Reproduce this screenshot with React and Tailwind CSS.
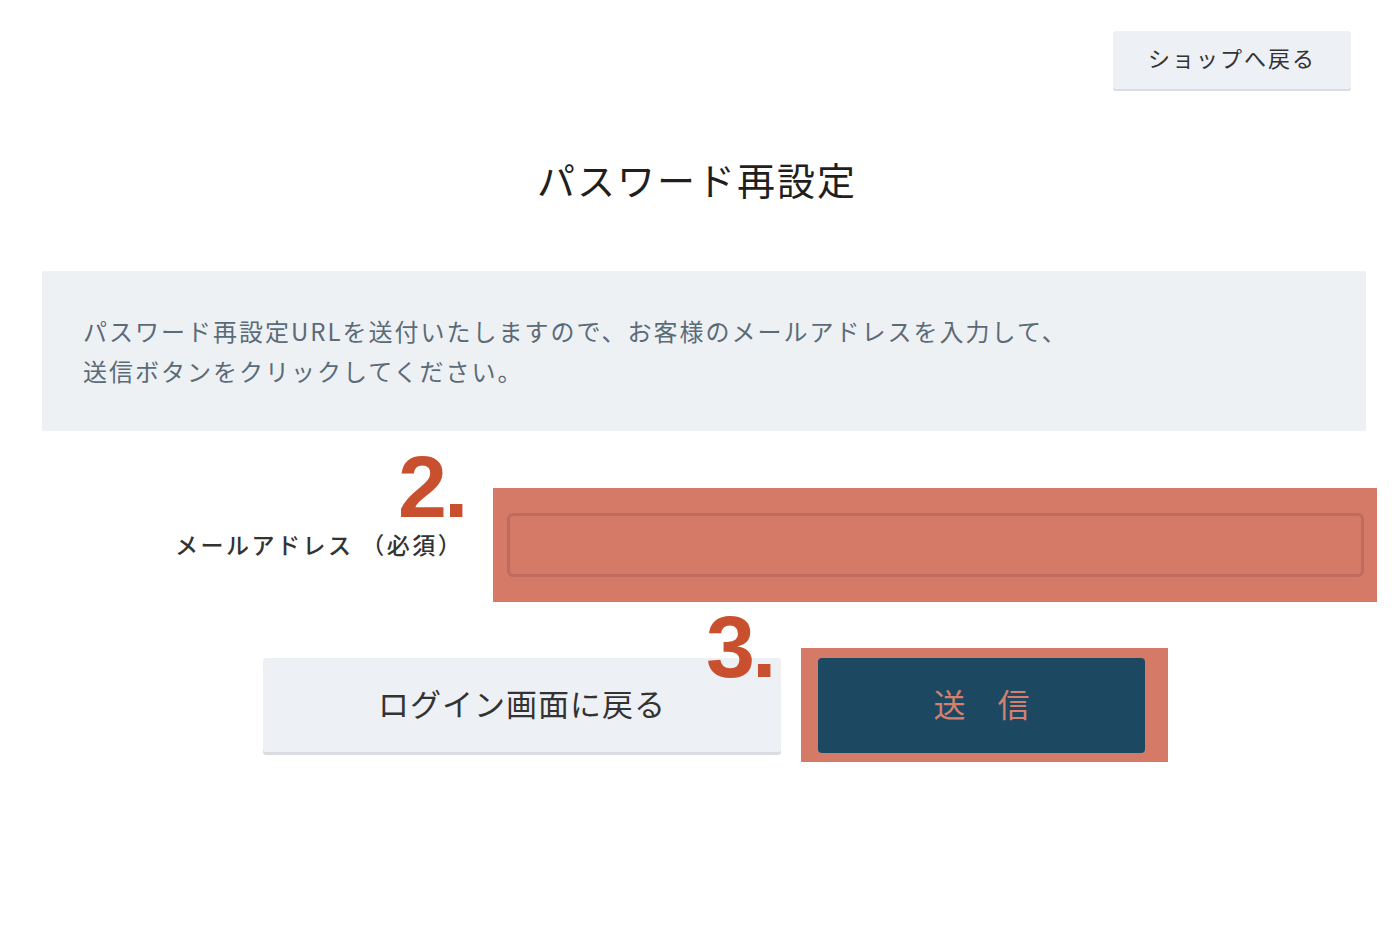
// Password reset screen with annotation highlights
import React from 'react'

const FONT = "font-['Noto_Sans_CJK_JP','Noto_Sans',sans-serif]"

function StepMark({ label, className }) {
  // annotation numbers drawn over the form
  return (
    <span
      className={`absolute font-['Liberation_Sans',Arial,sans-serif] font-bold text-[88px] leading-[70px] tracking-[-3px] text-[#c9502f] ${className}`}
    >
      {label}
    </span>
  )
}

export default function App() {
  return (
    <div className={`relative w-[1394px] h-[930px] bg-white text-[#333] ${FONT}`}>
      {/* header */}
      <div className="flex justify-end pt-[31px] pr-[43px]">
        <button className="w-[238px] h-[58px] pb-[5px] rounded-[3px] bg-[#edf0f4] shadow-[0_2px_0_#d9dde2] text-[22px] tracking-[2px] text-[#333]">
          ショップへ戻る
        </button>
      </div>

      <h1 className="mt-[63px] text-center text-[38px] leading-[54px] tracking-[2px] text-[#1f1f1f]">
        パスワード再設定
      </h1>

      {/* notice */}
      <div className="mt-[65px] ml-[42px] mr-[28px] h-[160px] bg-[#eef1f4] pt-[40px] pl-[41px] text-[24px] leading-[40px] tracking-[2px] text-[#5b6b78]">
        <p>パスワード再設定URLを送付いたしますので、お客様のメールアドレスを入力して、</p>
        <p>送信ボタンをクリックしてください。</p>
      </div>

      {/* email row */}
      <div className="mt-[57px] flex items-center pl-[175px]">
        <label className="w-[318px] pb-[2px] text-[23px] leading-[28px] font-medium tracking-[2.5px] text-[#333]">
          メールアドレス （必須）
        </label>
        <div className="w-[884px] h-[114px] bg-[#d67a68] pl-[14px] pr-[13px] pt-[25px]">
          <input
            className="block w-full h-[64px] rounded-[6px] border-[3px] border-[#bf6c5c] bg-[#d67a68] outline-none"
            type="email"
          />
        </div>
      </div>

      {/* actions */}
      <div className="mt-[46px] flex items-center pl-[263px]">
        <button className="w-[518px] h-[94px] pb-[4px] rounded-[3px] bg-[#edf0f4] shadow-[0_3px_0_#d9dde2] text-[31px] tracking-[1px] text-[#333]">
          ログイン画面に戻る
        </button>
        <div className="ml-[20px] w-[367px] h-[114px] bg-[#d67a68] pl-[17px] pt-[10px]">
          <button className="w-[327px] h-[95px] pb-[6px] rounded-[4px] bg-[#1d4861] text-[32px] text-[#d4806d]">
            送　信
          </button>
        </div>
      </div>

      <StepMark label="2." className="left-[398px] top-[452px]" />
      <StepMark label="3." className="left-[706px] top-[612px]" />
    </div>
  )
}
